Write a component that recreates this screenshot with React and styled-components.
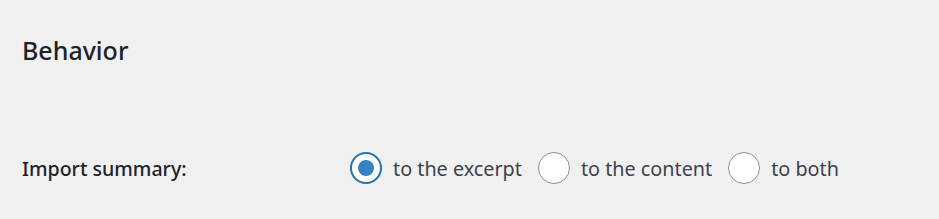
import React, { useState } from "react";
import styled, { createGlobalStyle } from "styled-components";

const Global = createGlobalStyle`
  html, body {
    margin: 0;
    background: #f0f0f1;
    font-family: "Noto Sans", "Open Sans", sans-serif;
    color: #1d2327;
  }
`

const Page = styled.div`
  padding: 30px 22px 0;
`

const Title = styled.h2`
  margin: 0;
  font-size: 25px;
  font-weight: 500;
  line-height: 40px;
`

const Row = styled.div`
  display: flex;
  align-items: center;
  margin-top: 82px;
`

const Label = styled.div`
  width: 328px;
  font-size: 19.6px;
  font-weight: 500;
`

const Options = styled.div`
  display: flex;
  align-items: center;
  gap: 16px;
`

const Option = styled.label`
  display: flex;
  align-items: center;
  gap: 11px;
  font-size: 19.8px;
  color: #3c434a;
  cursor: pointer;
`

const Radio = styled.span`
  box-sizing: border-box;
  width: 32px;
  height: 32px;
  border-radius: 50%;
  background: #fff;
  border: ${p => (p.checked ? "2.5px solid #2271b1" : "1px solid #8c8f94")};
  display: flex;
  align-items: center;
  justify-content: center;
  &::after {
    content: "";
    display: ${p => (p.checked ? "block" : "none")};
    width: 16px;
    height: 16px;
    border-radius: 50%;
    background: #3582c4;
  }
`

const options = ["to the excerpt", "to the content", "to both"]

function App() {
    const [value, setValue] = useState(0)
    return (
        <Page>
            <Global />
            <Title>Behavior</Title>
            <Row>
                <Label>Import summary:</Label>
                <Options>
                    {options.map((o, i) => (
                        <Option key={o} onClick={() => setValue(i)}>
                            <Radio checked={value === i} />
                            {o}
                        </Option>
                    ))}
                </Options>
            </Row>
        </Page>
    )
}

export default App
